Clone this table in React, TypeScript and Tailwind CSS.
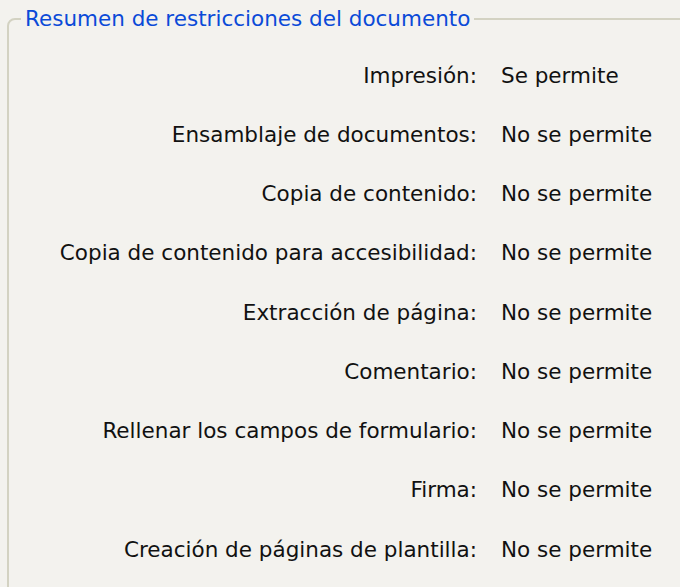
import React from 'react'

const rows: [string, string][] = [
    ['Impresión:', 'Se permite'],
    ['Ensamblaje de documentos:', 'No se permite'],
    ['Copia de contenido:', 'No se permite'],
    ['Copia de contenido para accesibilidad:', 'No se permite'],
    ['Extracción de página:', 'No se permite'],
    ['Comentario:', 'No se permite'],
    ['Rellenar los campos de formulario:', 'No se permite'],
    ['Firma:', 'No se permite'],
    ['Creación de páginas de plantilla:', 'No se permite'],
]

const App = () => {
    return (
        <div className="w-[680px] h-[587px] overflow-hidden bg-[#f3f2ee] pt-[5px] font-['DejaVu_Sans',sans-serif] text-[21.5px] text-[#111]">
            <fieldset className="ml-[7px] mr-[-30px] h-[620px] border-2 border-[#d3d2c2] rounded-tl-[8px] pl-0 pr-0">
                <legend className="ml-[12px] px-[4px] text-[#0a4ad8] leading-[28px]">
                    Resumen de restricciones del documento
                </legend>
                <div className="grid grid-cols-[468px_1fr] gap-x-[24px] mt-[13px]">
                    {rows.map(([label, value]) => (
                        <React.Fragment key={label}>
                            <div className="h-[59.25px] flex items-center justify-end">{label}</div>
                            <div className="h-[59.25px] flex items-center">{value}</div>
                        </React.Fragment>
                    ))}
                </div>
            </fieldset>
        </div>
    )
}

export default App
